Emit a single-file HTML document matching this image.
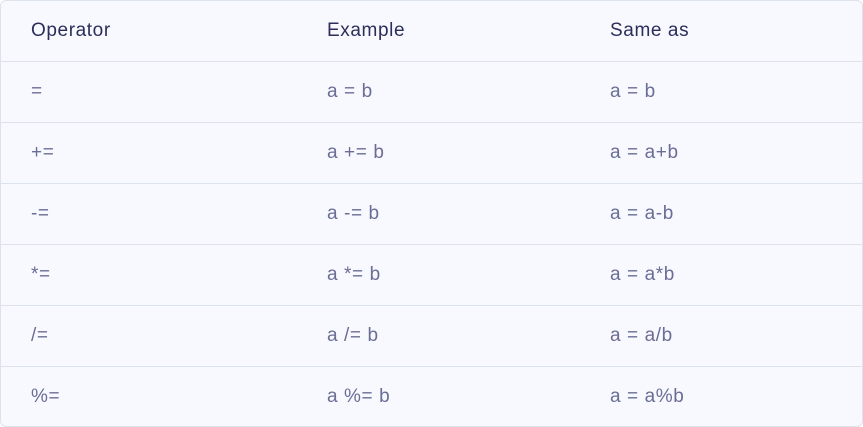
<!DOCTYPE html><html><head><style>
body{margin:0;background:#fff;font-family:"Liberation Sans",sans-serif;}
.t{position:absolute;left:0;top:0;width:861px;height:425px;border:1px solid #dde3ec;border-radius:6px;background:#f8f9fe;overflow:hidden}
.r{position:absolute;left:0;width:861px;height:61px;border-bottom:1px solid #dde3ec;box-sizing:border-box}
.c{position:absolute;top:0;line-height:59px;font-size:19px;letter-spacing:0.6px;color:#6a6d96}
.h .c{color:#2b2e5a}
</style></head><body><div class="t">
<div class="r h" style="top:0"><span class="c" style="left:30px">Operator</span><span class="c" style="left:326px">Example</span><span class="c" style="left:609px">Same as</span></div>
<div class="r" style="top:61px"><span class="c" style="left:30px">=</span><span class="c" style="left:326px">a = b</span><span class="c" style="left:609px">a = b</span></div>
<div class="r" style="top:122px"><span class="c" style="left:30px">+=</span><span class="c" style="left:326px">a += b</span><span class="c" style="left:609px">a = a+b</span></div>
<div class="r" style="top:183px"><span class="c" style="left:30px">-=</span><span class="c" style="left:326px">a -= b</span><span class="c" style="left:609px">a = a-b</span></div>
<div class="r" style="top:244px"><span class="c" style="left:30px">*=</span><span class="c" style="left:326px">a *= b</span><span class="c" style="left:609px">a = a*b</span></div>
<div class="r" style="top:305px"><span class="c" style="left:30px">/=</span><span class="c" style="left:326px">a /= b</span><span class="c" style="left:609px">a = a/b</span></div>
<div class="r" style="top:366px;border:none"><span class="c" style="left:30px">%=</span><span class="c" style="left:326px">a %= b</span><span class="c" style="left:609px">a = a%b</span></div>
</div></body></html>
